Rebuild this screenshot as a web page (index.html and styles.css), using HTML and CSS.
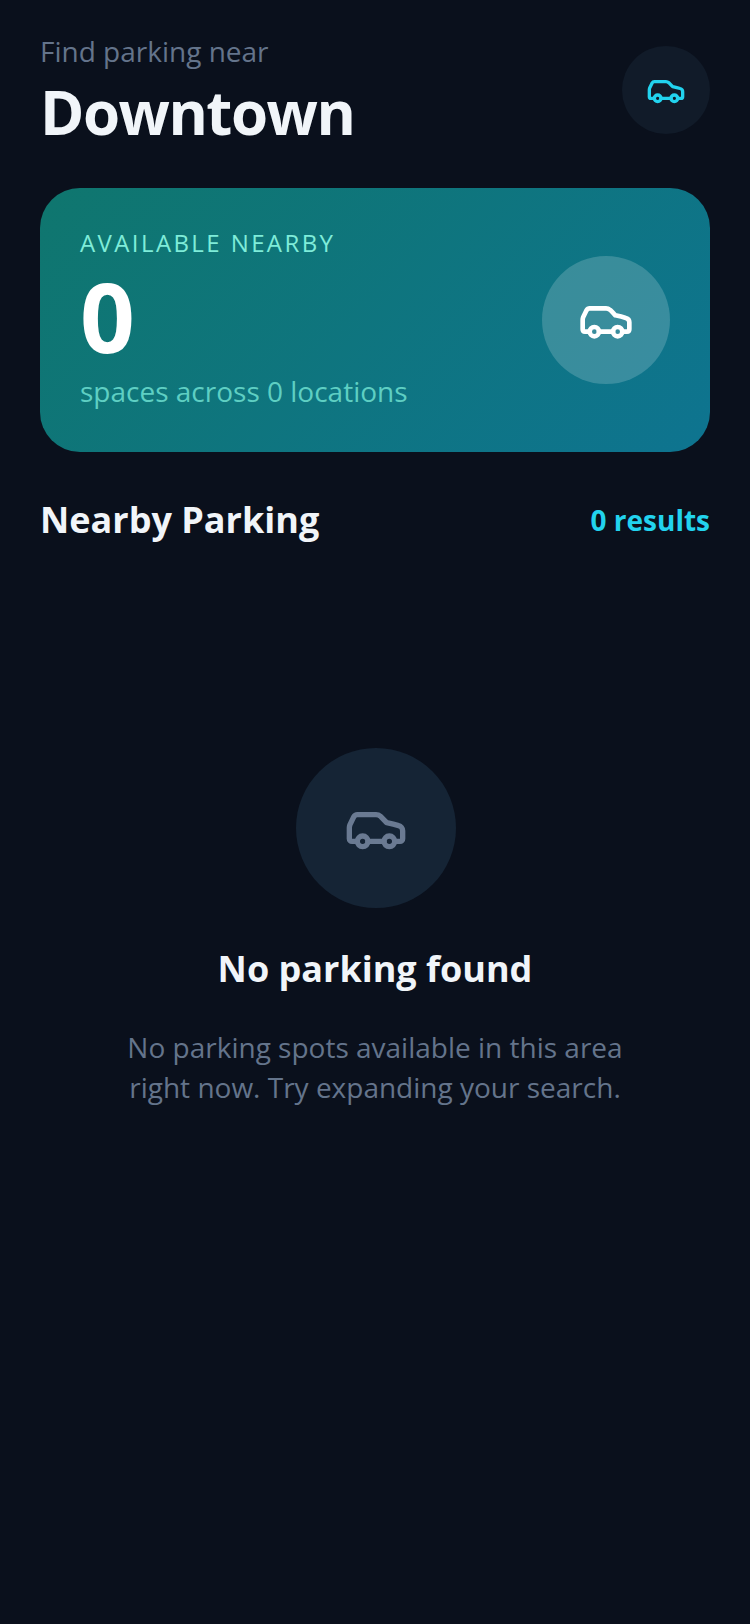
FILE: index.html
```html
<!DOCTYPE html>
<html lang="en">
<head>
    <meta charset="UTF-8">
    <meta name="viewport" content="width=device-width, initial-scale=1.0">
    <title>Find Parking</title>
    <link rel="stylesheet" href="styles.css">
</head>
<body>
    <svg class="icon-defs" aria-hidden="true">
        <symbol id="car" viewBox="0 0 24 24">
            <path d="M19 17h2c.6 0 1-.4 1-1v-3c0-.9-.7-1.7-1.5-1.9C18.7 10.6 16 10 16 10s-1.3-1.4-2.2-2.3c-.5-.4-1.1-.7-1.8-.7H5c-.6 0-1.1.4-1.4.9l-1.4 2.9A3.7 3.7 0 0 0 2 12v4c0 .6.4 1 1 1h2"/>
            <circle cx="7" cy="17" r="2"/>
            <path d="M9 17h6"/>
            <circle cx="17" cy="17" r="2"/>
        </symbol>
    </svg>

    <div class="container">
        <header class="header">
            <div class="header-text">
                <p class="header-label">Find parking near</p>
                <h1 class="header-title">Downtown</h1>
            </div>
            <div class="header-badge">
                <svg class="car-icon car-small"><use href="#car"/></svg>
            </div>
        </header>

        <section class="summary">
            <div class="summary-text-block">
                <p class="summary-label">AVAILABLE NEARBY</p>
                <p class="summary-count">0</p>
                <p class="summary-text">spaces across 0 locations</p>
            </div>
            <div class="summary-badge">
                <svg class="car-icon car-medium"><use href="#car"/></svg>
            </div>
        </section>

        <div class="section-head">
            <h2>Nearby Parking</h2>
            <span class="results">0 results</span>
        </div>

        <section class="empty">
            <div class="empty-badge">
                <svg class="car-icon car-large"><use href="#car"/></svg>
            </div>
            <h3>No parking found</h3>
            <p>No parking spots available in this area right now. Try expanding your search.</p>
        </section>
    </div>
</body>
</html>
```

FILE: styles.css
```css
body {
    margin: 0;
    background-color: #0a101c;
    font-family: "Open Sans", sans-serif;
    color: #f1f5f9;
}

p, h1, h2, h3 {
    margin: 0;
}

.icon-defs {
    display: none;
}

.container {
    min-height: 1624px;
    box-sizing: border-box;
    padding: 32px 40px 0;
}

.header {
    display: flex;
    justify-content: space-between;
    align-items: center;
}

.header-label {
    font-size: 28px;
    line-height: 38px;
    color: #64748b;
}

.header-title {
    font-size: 60px;
    line-height: 72px;
    font-weight: 700;
    letter-spacing: -1.5px;
    margin-top: 6px;
}

.header-badge {
    width: 88px;
    height: 88px;
    border-radius: 50%;
    background-color: #111b29;
    display: flex;
    justify-content: center;
    align-items: center;
}

.car-icon {
    fill: none;
    stroke: currentColor;
    stroke-width: 2;
    stroke-linecap: round;
    stroke-linejoin: round;
}

.car-small {
    width: 40px;
    height: 40px;
    color: #22d3ee;
}

.car-medium {
    width: 56px;
    height: 56px;
    color: #fff;
}

.car-large {
    width: 64px;
    height: 64px;
    color: #6a7a92;
}

.summary {
    margin-top: 40px;
    height: 264px;
    box-sizing: border-box;
    padding: 0 40px;
    border-radius: 40px;
    background: linear-gradient(135deg, #0f766e, #0e7490);
    display: flex;
    justify-content: space-between;
    align-items: center;
}

.summary-text-block {
    padding-bottom: 4px;
}

.summary-label {
    font-size: 24px;
    line-height: 32px;
    letter-spacing: 2.4px;
    color: #7fecd9;
}

.summary-count {
    margin-top: 1px;
    font-size: 96px;
    line-height: 112px;
    font-weight: 700;
    color: #fff;
}

.summary-text {
    margin-top: 1px;
    font-size: 28px;
    line-height: 36px;
    color: #5ecfc3;
}

.summary-badge {
    width: 128px;
    height: 128px;
    border-radius: 50%;
    background-color: rgba(255,255,255,0.18);
    display: flex;
    justify-content: center;
    align-items: center;
}

.section-head {
    margin-top: 44px;
    display: flex;
    justify-content: space-between;
    align-items: center;
}

.section-head h2 {
    font-size: 36px;
    line-height: 48px;
    font-weight: 700;
}

.results {
    font-size: 28px;
    font-weight: 700;
    color: #22d3ee;
}

.empty {
    margin-top: 204px;
    display: flex;
    flex-direction: column;
    align-items: center;
    text-align: center;
}

.empty-badge {
    width: 160px;
    height: 160px;
    margin-left: 2px;
    border-radius: 50%;
    background-color: #152435;
    display: flex;
    justify-content: center;
    align-items: center;
}

.empty h3 {
    margin-top: 37px;
    font-size: 36px;
    line-height: 48px;
    font-weight: 700;
}

.empty p {
    margin-top: 34px;
    width: 520px;
    font-size: 28px;
    line-height: 40px;
    color: #64748b;
}
```
